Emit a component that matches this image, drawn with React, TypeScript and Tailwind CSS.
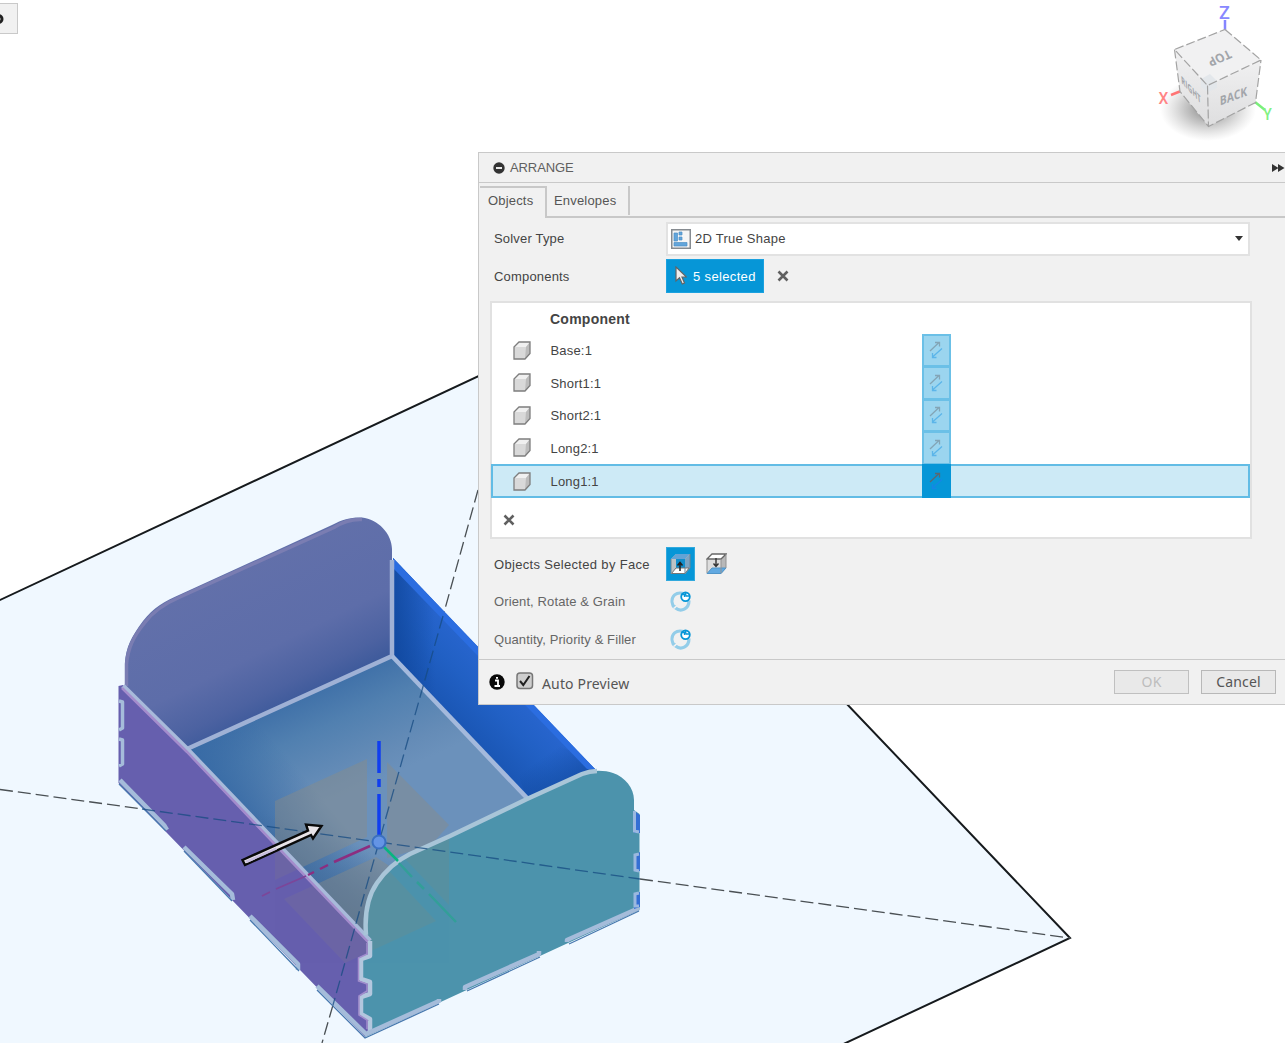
import React from "react";

const rows = ["Base:1", "Short1:1", "Short2:1", "Long2:1", "Long1:1"];

const TEAL =
  "M365 930 C365 905 370 893 377 883 C386 870 396 861 410 854 L450 836 L527 799 L582 774 C591 770 604 770 613 773 C625 777 634 788 634 800 L634 810 L639.5 814 L639.5 910 L365 1037 L370 1028 L370 1018 L361 1014 L361 995 L370 993 L370 982 L360 980 L360 958 L370 956 L370 942 Z";
const BACK_PANEL =
  "M125 686 L125 662 C126 648 131 637 143 621 C153 608 165 601 180 594.5 L332 525 C343 519 352 517 362 517.5 C378 519 392 534 392 549 L392 656 L187 748 Z";
const FLOOR = "M187 748 L392 656 L527 798 L410 854 C385 868 366 885 366 935 Z";
const PURPLE =
  "M118.5 686 L123 685 L370 941 L370 956 L360 958 L360 980 L370 982 L370 993 L361 995 L361 1014 L370 1018 L370 1028 L365 1037 L118.5 783 Z";

function Scene() {
  return (
    <svg className="absolute inset-0" width="1285" height="1043" viewBox="0 0 1285 1043">
      <defs>
        <linearGradient id="back" gradientUnits="userSpaceOnUse" x1="230" y1="570" x2="300" y2="712">
          <stop offset="0" stopColor="#6270aa" />
          <stop offset="0.55" stopColor="#5d6da9" />
          <stop offset="0.8" stopColor="#4c62a1" />
          <stop offset="1" stopColor="#365698" />
        </linearGradient>
        <linearGradient id="floor" gradientUnits="userSpaceOnUse" x1="290" y1="700" x2="335" y2="800">
          <stop offset="0" stopColor="#3f70a8" />
          <stop offset="0.35" stopColor="#5180b0" />
          <stop offset="0.8" stopColor="#658cb7" />
          <stop offset="1" stopColor="#6b91bb" />
        </linearGradient>
        <linearGradient id="floorLeft" gradientUnits="userSpaceOnUse" x1="240" y1="803" x2="290" y2="760">
          <stop offset="0" stopColor="#376aa5" stopOpacity="0.85" />
          <stop offset="1" stopColor="#376aa5" stopOpacity="0" />
        </linearGradient>
        <linearGradient id="floorLow" gradientUnits="userSpaceOnUse" x1="370" y1="850" x2="345" y2="920">
          <stop offset="0" stopColor="#456c98" stopOpacity="0" />
          <stop offset="1" stopColor="#456c98" stopOpacity="0.9" />
        </linearGradient>
        <linearGradient id="blue" gradientUnits="userSpaceOnUse" x1="425" y1="690" x2="478" y2="640">
          <stop offset="0" stopColor="#1a56b4" />
          <stop offset="0.5" stopColor="#2160c4" />
          <stop offset="1" stopColor="#2966d0" />
        </linearGradient>
        <linearGradient id="blueStart" gradientUnits="userSpaceOnUse" x1="393" y1="640" x2="435" y2="640">
          <stop offset="0" stopColor="#0f469b" stopOpacity="0.8" />
          <stop offset="1" stopColor="#0f469b" stopOpacity="0" />
        </linearGradient>
        <linearGradient id="blueEnd" gradientUnits="userSpaceOnUse" x1="560" y1="745" x2="582" y2="776">
          <stop offset="0" stopColor="#134ca3" stopOpacity="0" />
          <stop offset="1" stopColor="#134ca3" stopOpacity="0.75" />
        </linearGradient>
        <radialGradient id="shade">
          <stop offset="0" stopColor="#555" stopOpacity="0.75" />
          <stop offset="0.5" stopColor="#777" stopOpacity="0.4" />
          <stop offset="1" stopColor="#999" stopOpacity="0" />
        </radialGradient>
        <linearGradient id="cubeFace" x1="0" y1="0" x2="0" y2="1">
          <stop offset="0" stopColor="#f0f0f1" />
          <stop offset="1" stopColor="#dededf" />
        </linearGradient>
        <clipPath id="teal"><path d={TEAL} /></clipPath>
        <clipPath id="purple"><path d={PURPLE} /></clipPath>
      </defs>

      {/* work plane */}
      <path d="M-10 604.7 L517 358 L1070 938 L820 1055 L-10 1055 Z" fill="#f0f8ff" stroke="#161a1d" strokeWidth="2" />
      <g stroke="#4a5054" strokeWidth="1.3" strokeDasharray="13 5">
        <path d="M0 789.500 L142 809" />
        <path d="M640 879 L1070 938" />
        <path d="M478 490 L443 616" />
        <path d="M333 1005 L322 1043" />
      </g>

      {/* tray */}
      <path d="M393 558 L595 769 L583 775 L527 800 L392 656 Z" fill="url(#blue)" />
      <path d="M393 558 L595 769 L583 775 L527 800 L392 656 Z" fill="url(#blueStart)" />
      <path d="M500 720 L580 755 L597 771 L527 800 Z" fill="url(#blueEnd)" />
      <path d="M393 558 L595 769 L587 769 L393 568 Z" fill="#2b6de0" />
      <path d={FLOOR} fill="url(#floor)" />
      <path d={FLOOR} fill="url(#floorLeft)" />
      <path d={FLOOR} fill="url(#floorLow)" />
      <path d={BACK_PANEL} fill="url(#back)" />
      <path d="M126.500 686 L126.500 664 C128 648 133 637 144.500 623 C154 610 166 603 180 597 L334 527.500 C344 521 352 519 362 519.500" fill="none" stroke="#7a7db2" strokeWidth="3.500" />

      {/* origin planes */}
      <g fill="#8c8c85" opacity="0.42">
        <path d="M275 801 L367 759 L367 837 L275 880 Z" />
        <path d="M387 762 L449 825 L430 846 L387 858 Z" />
        <path d="M284 899 L376 857 L410 880 L366 935 L345 962 Z" />
      </g>
      <path d={PURPLE} fill="#665fae" />
      <path d={TEAL} fill="#4c93ac" />
      <g clipPath="url(#purple)" fill="#858282" opacity="0.18">
        <path d="M275 801 L367 837 L275 880 Z" />
        <path d="M284 899 L376 857 L436 921 L345 963 Z" />
      </g>
      <g clipPath="url(#teal)" fill="#7c887b" opacity="0.22">
        <path d="M387 762 L449 825 L449 905 L387 840 Z" />
        <path d="M284 899 L376 857 L436 921 L345 963 Z" />
      </g>
      <path d="M392 560 L392 656 L187 749" fill="none" stroke="#9fb1d5" strokeWidth="4.500" />
      <path d="M392 656 L527 798" fill="none" stroke="#a4b9dc" strokeWidth="4.500" />
      <path d="M123 686 L187 749 L370 941" fill="none" stroke="#a8bada" strokeWidth="5" />
      <path d="M122 688 L187 752 L369 943" fill="none" stroke="#a48ccc" strokeWidth="2.500" />
      <path d="M366 935 C364 909 370 893 377 883 C386 870 396 861 410 854 L450 836 L527 799 L582 774 Q590 771 597 771" fill="none" stroke="#a9c5d8" strokeWidth="4.500" />
      <path d="M370 941 L370 956 L361 959 L361 979 L370 982 L370 994 L361 997 L361 1014 L370 1019 L370 1033" fill="none" stroke="#b3c7de" strokeWidth="4.500" strokeLinejoin="round" />
      <path d="M367 943 L367 954 L358.500 958 L358.500 981 L367 984 L367 991 L359 996 L359 1015 L367 1020 L367 1029" fill="none" stroke="#a18dcc" strokeWidth="1.500" />
      <g fill="none" stroke="#a5bcda" strokeWidth="4.500" strokeLinejoin="round">
        <path d="M120 780 L164 825 L167 830" />
        <path d="M184 847 L232 894 L233 900" />
        <path d="M250 916 L298 964 L298 970" />
        <path d="M317 986 L366 1034 L439 1001 L439 999" />
        <path d="M465 990 L465 987 L539 954 L539 951" />
        <path d="M567 942 L567 940 L639 908" />
        <path d="M119 701 L122.500 702 L122.500 728 L119 730" strokeWidth="3.500" />
        <path d="M119 739 L122.500 740 L122.500 764 L119 766" strokeWidth="3.500" />
      </g>
      <g fill="none" stroke="#4778ae" strokeWidth="1.300">
        <path d="M119 784 L166 831 M184 851 L232 901 M250 920 L299 971 M317 990 L365 1038 L439 1004 M467 991 L540 957 M569 944 L639 911" />
      </g>
      <path d="M634 811 L640 815 L640 833 L634 833 Z M634 855 L640 852 L640 871 L634 871 Z M634 894 L640 892 L640 907 L634 909 Z" fill="#346fd4" />
      <path d="M634.500 811 L634.500 831 L639 832 M639 854 L635 855 L635 870 L639 871 M639 893 L635 894 L635 906 L639 906" fill="none" stroke="#9bb8df" strokeWidth="3" />
      <g stroke="#164b82" strokeWidth="1.300" strokeDasharray="13 5" opacity="0.75">
        <path d="M443 616 L379 842" />
        <path d="M379 842 L333 1005" />
        <path d="M142 809 L379 842" />
        <path d="M379 842 L640 879" />
      </g>

      {/* axes */}
      <path d="M379 741 V773 M379 779 V787 M379 794 V836" stroke="#103ef0" strokeWidth="3.500" />
      <path d="M370 846 L334 862 M328 865 L320 869 M314 872 L308 875" stroke="#8c2e80" strokeWidth="2.500" />
      <path d="M306 876 L276 889 M270 892 L262 896" stroke="#7c4699" strokeWidth="1.800" />
      <path d="M384 847 L398 861" stroke="#08b580" strokeWidth="2.500" />
      <path d="M399 863 L412 877 M417 882 L424 889 M429 894 L456 922" stroke="#329f98" strokeWidth="2.500" />
      <circle cx="379" cy="842" r="6.500" fill="#6494e5" stroke="#3a6fc0" strokeWidth="2" />
      <path d="M242.500 860 L308 830.500 L306 824.500 L321.500 826 L313 838.500 L311 835 L245 865 Z" fill="#e8e4e8" stroke="#090909" strokeWidth="2.400" />
      <path d="M245 861 L276 847.500 L277 849.500 L247 863 Z" fill="#c9bfdf" />

      {/* view cube */}
      <ellipse cx="1208" cy="109" rx="48" ry="32" fill="url(#shade)" />
      <path d="M1225 20 V31" stroke="#8585ff" strokeWidth="2.500" />
      <path d="M1171 95 L1181 91" stroke="#ff7474" strokeWidth="2.500" />
      <path d="M1255 102 L1265 110" stroke="#7af07a" strokeWidth="2.500" />
      <path d="M1174.500 49.500 L1207.500 85.500 L1208.500 126.500 L1180 91.500 Z" fill="url(#cubeFace)" />
      <path d="M1207.500 85.500 L1261 60 L1255.500 102.500 L1208.500 126.500 Z" fill="url(#cubeFace)" />
      <path d="M1225 29.500 L1261 60 L1207.500 85.500 L1174.500 49.500 Z" fill="#f1f1f2" />
      <path d="M1201 79 L1210 74 L1217 81 L1217 88 L1208 92 L1201 87 Z" fill="#e3e7eb" />
      <path d="M1225 29.500 L1261 60 L1207.500 85.500 L1174.500 49.500 Z M1174.500 49.500 L1180 91.500 L1208.500 126.500 L1255.500 102.500 L1261 60 M1207.500 85.500 L1208.500 126.500" fill="none" stroke="#a3a3a3" strokeWidth="1.200" strokeDasharray="9 3" />
      <g fontFamily="'Open Sans'" fontWeight="700" fill="#a2a5aa">
        <text transform="matrix(-.88 .38 -.45 -.85 1228.500 49.500)" fontSize="13" textLength="25" lengthAdjust="spacingAndGlyphs">TOP</text>
        <text transform="matrix(.9 -.33 .03 1 1220 105.500)" fontSize="12.500" textLength="30.500" lengthAdjust="spacingAndGlyphs">BACK</text>
        <text transform="matrix(.62 .66 .1 1 1181.500 83)" fontSize="11" textLength="32" lengthAdjust="spacingAndGlyphs">RIGHT</text>
      </g>
      <g fontFamily="Roboto" fontWeight="500">
        <text x="1219" y="19" fontSize="18" fill="#8888ff">Z</text>
        <text x="1158.500" y="104" fontSize="17" textLength="10" lengthAdjust="spacingAndGlyphs" fill="#ff8585">X</text>
        <text x="1263" y="120" fontSize="17" textLength="9" lengthAdjust="spacingAndGlyphs" fill="#82f282">Y</text>
      </g>
    </svg>
  );
}

function Cross() {
  return (
    <svg width="12" height="12" viewBox="0 0 12 12" fill="none" stroke="#606060" strokeWidth="2.600">
      <path d="M1.500 1.500 L10.500 10.500 M10.500 1.500 L1.500 10.500" />
    </svg>
  );
}

function BodyIcon() {
  return (
    <svg width="18" height="19" viewBox="0 0 18 19">
      <path d="M1 6 L6 1 H17 V12.500 L12 18 H1 Z" fill="#d9d9d9" />
      <path d="M1 6 L6 1 H17 L13 6 Z" fill="#f0f0f0" />
      <path d="M13 6 L17 1 V12.500 L12 18 Z" fill="#bcbcbc" />
      <path d="M1 6 L6 1 H17 V12.500 L12 18 H1 Z" fill="none" stroke="#7e7e7e" strokeWidth="1.300" />
    </svg>
  );
}

function FlipIcon({ active }: { active: boolean }) {
  return (
    <svg width="16" height="18" viewBox="0 0 16 18" fill="none" strokeWidth="1.300">
      <path d="M2 10 L11 1.500 M7 1.500 H11.500 V5.500" stroke={active ? "#5a6872" : "#83a5b6"} />
      <path d="M14 7.500 L4.500 16 M4.500 12 V16.500 H8.500" stroke={active ? "#1687e4" : "#5cb5e9"} />
    </svg>
  );
}

function FaceIcon({ up }: { up: boolean }) {
  return up ? (
    <svg width="21" height="22" viewBox="0 0 21 22">
      <path d="M1 6 L6 1 H20 V15 L15 21 H1 Z" fill="#bec3c5" />
      <path d="M1 6 L6 1 H20 L15 6 Z" fill="#62a3d6" />
      <path d="M15 6 L20 1 V15 L15 20 Z" fill="#7ba4c4" />
      <path d="M6 6 H15 V15 H6 Z" fill="#118ecc" />
      <path d="M1.500 20.500 L6 15 H19 L15 20.500 Z" fill="#fff" stroke="#777" />
      <path d="M1 6 V21 M20 1 V15 L15 20.500 V15" stroke="#6d8596" fill="none" />
      <path d="M10 18 V10 M7.500 12.500 L10 9.500 L12.500 12.500" stroke="#222" strokeWidth="1.500" fill="none" />
    </svg>
  ) : (
    <svg width="21" height="22" viewBox="0 0 21 22">
      <path d="M1 6 L6 1 H20 V15 L15 21 H1 Z" fill="#ddd" />
      <path d="M15 6 L20 1 V15 L15 21 Z" fill="#b8b8b8" />
      <path d="M1 20.500 L6 15 H20 L15 20.500 Z" fill="#61a9e1" stroke="#5195c8" />
      <path d="M1 6 L6 1 H20 L15 6 Z" fill="#fff" stroke="#666" strokeWidth="1.300" />
      <path d="M1 6 V20 M20 1 V15 M15 6 V20" stroke="#929292" />
      <path d="M10 5 V13 M7.500 10.500 L10 13.500 L12.500 10.500" stroke="#333" strokeWidth="1.400" fill="none" />
    </svg>
  );
}

function CycleIcon() {
  return (
    <svg width="21" height="21" viewBox="0 0 21 21" fill="none">
      <path d="M12.500 2.200 C6 .7 1.500 5.500 2 11 Q2.300 14 4.500 16.500" stroke="#93cde9" strokeWidth="3" />
      <path d="M5.500 17 C11 21.500 19 18 19 9.500" stroke="#93cde9" strokeWidth="3.200" />
      <path d="M1.500 15.500 L6 14 L4.500 18 Z" fill="#93cde9" />
      <path d="M3.500 17.500 L6.500 15" stroke="#f1f1f1" strokeWidth="1.400" />
      <circle cx="15.500" cy="5.800" r="4.300" fill="#fff" stroke="#0696d7" strokeWidth="1.800" />
      <path d="M11.500 3.500 H14.500 V6 M15.500 2 L16 5 H19" stroke="#0696d7" strokeWidth="1.300" />
    </svg>
  );
}

export default function App() {
  return (
    <div className="relative h-[1043px] w-[1285px] overflow-hidden bg-white font-['Liberation_Sans',sans-serif] text-[13px] leading-4 tracking-[0.18px] text-[#444]">
      <Scene />
      <div className="absolute -left-2 top-[3px] flex h-[31px] w-[26px] items-center border border-[#c9c9c9] bg-[#f1f1f1]">
        <svg width="12" height="12" viewBox="0 0 12 12" className="-ml-px">
          <circle cx="6.500" cy="6" r="3.500" fill="none" stroke="#222" strokeWidth="3" />
        </svg>
      </div>

      <div className="absolute left-[478px] top-[152px] flex h-[553px] w-[808px] flex-col border border-[#c9c9c9] bg-[#f1f1f1]">
        <header className="flex h-[30px] shrink-0 items-center justify-between border-b border-[#c9c9c9] pl-[14px] pr-px">
          <div className="flex items-center gap-[5px] tracking-[-0.1px] text-[#606060]">
            <svg width="12" height="12" viewBox="0 0 12 12">
              <circle cx="6" cy="6" r="5.700" fill="#333" />
              <path d="M3 6 H9" stroke="#fff" strokeWidth="1.800" />
            </svg>
            ARRANGE
          </div>
          <svg width="13" height="8" viewBox="0 0 13 8" fill="#333" className="mr-[-1px] mt-px">
            <path d="M0 0 L6.500 4 L0 8 Z M6 0 L12.500 4 L6 8 Z" />
          </svg>
        </header>

        <nav className="flex h-[35px] shrink-0 items-end text-[#555]">
          <div className="ml-px h-[32px] w-[67px] border-r-2 border-t-2 border-[#c8c8c8] pl-[8px] pt-[5px]">Objects</div>
          <div className="h-[32px] flex-1 border-b-2 border-[#c8c8c8]">
            <div className="h-[29px] w-[83px] border-r-2 border-[#c8c8c8] pl-[7px] pt-[7px]">Envelopes</div>
          </div>
        </nav>

        <div className="flex h-[41px] shrink-0 items-center pl-[15px]">
          <span className="w-[172px]">Solver Type</span>
          <div className="flex h-[34px] w-[584px] items-center border-2 border-[#e2e2e2] bg-white pl-[3px] pr-[5px]">
            <svg width="20" height="20" viewBox="0 0 20 20">
              <rect x=".75" y=".75" width="18.500" height="18.500" fill="#f5f5f5" stroke="#868b90" strokeWidth="1.500" />
              <path d="M3 4 H6.500 V12 H3 Z M8 3 H11 V6 H8 Z M8 8 H11 V11 H8 Z M3 13.500 H16 V17 H3 Z" fill="#62a5db" stroke="#4f91c5" strokeWidth=".7" />
            </svg>
            <span className="ml-[4px] flex-1 tracking-[0.25px]">2D True Shape</span>
            <svg width="8" height="5" viewBox="0 0 8 5"><path d="M0 0 H8 L4 5 Z" fill="#333" /></svg>
          </div>
        </div>
        <div className="flex h-[34px] shrink-0 items-center pl-[15px]">
          <span className="w-[172px] pt-px">Components</span>
          <button className="flex h-[34px] w-[98px] items-center border border-[#1ba1df] bg-[#0696d7] pl-[8px] text-left text-white">
            <svg width="12" height="20" viewBox="0 0 12 20">
              <path d="M1 1 V15 L4.500 11.800 L7.300 18 L9.500 17 L7 11 H11.500 Z" fill="#eee" stroke="#646464" strokeWidth="1.200" />
            </svg>
            <span className="ml-[6px] pt-px tracking-[0.35px]">5 selected</span>
          </button>
          <span className="ml-[13px]"><Cross /></span>
        </div>

        <section className="ml-[11px] mt-2 flex h-[238px] w-[762px] shrink-0 flex-col border-2 border-[#e1e1e1] bg-white">
          <div className="h-[31px] shrink-0 pl-[58px] pt-[8px] text-[14px] font-bold tracking-[0.25px]">Component</div>
          {rows.map((name, i) => (
            <div
              key={name}
              className={
                i === 4
                  ? "-ml-px flex h-[34px] shrink-0 items-center border-2 border-[#62bce5] bg-[#cdeaf6]"
                  : "-ml-px flex h-[32.5px] shrink-0 items-center border-2 border-transparent"
              }
            >
              <span className="ml-[20px] w-[37.500px]"><BodyIcon /></span>
              <span className="w-[371px] pt-[2px]">{name}</span>
              <span
                className={
                  i === 4
                    ? "flex h-[34px] w-[29px] items-center justify-center bg-[#0696d7]"
                    : "flex h-[33.500px] w-[29px] items-center justify-center border-2 border-[#6bc0e7] bg-[#9bd5ef]"
                }
              >
                <FlipIcon active={i === 4} />
              </span>
            </div>
          ))}
          <div className="flex flex-1 items-center pl-[11px] pt-1"><Cross /></div>
        </section>

        <div className="mt-[6px] flex h-[38px] shrink-0 items-center pl-[15px]">
          <span className="w-[172px] pt-px tracking-[0.32px]">Objects Selected by Face</span>
          <span className="flex h-[34px] w-[29px] items-center justify-center border border-[#31a9dd] bg-[#0696d7]"><FaceIcon up /></span>
          <span className="ml-[11px]"><FaceIcon up={false} /></span>
        </div>
        <div className="flex h-[37px] shrink-0 items-center pl-[15px] tracking-[0.12px] text-[#666]">
          <span className="w-[176px]">Orient, Rotate &amp; Grain</span><CycleIcon />
        </div>
        <div className="flex h-[38px] shrink-0 items-center pl-[15px] tracking-[0.1px] text-[#666]">
          <span className="w-[176px] pt-px">Quantity, Priority &amp; Filler</span><CycleIcon />
        </div>

        <footer className="mt-px flex flex-1 items-center border-t border-[#c9c9c9] pl-[10px] pr-[9px] font-['Noto_Sans',sans-serif] text-[14px] tracking-[0.15px] text-[#555]">
          <svg width="16" height="16" viewBox="0 0 16 16">
            <circle cx="8" cy="8" r="7.700" fill="#080808" />
            <path d="M6 6.500 H9 V12 M5.500 12 H11 M7 3.800 H9" stroke="#fff" strokeWidth="1.800" fill="none" />
          </svg>
          <svg width="18" height="18" viewBox="0 0 18 18" className="mb-[2px] ml-[11px]">
            <rect x="1" y="1" width="15.500" height="15.500" rx="3" fill="#cecece" stroke="#777" strokeWidth="1.500" />
            <path d="M4 9 L7.300 13 L13.500 4" stroke="#222" strokeWidth="2" fill="none" />
          </svg>
          <span className="ml-2 flex-1 pt-1">Auto Preview</span>
          <button className="mb-[1px] h-[24px] w-[75px] border border-[#c0c0c0] bg-[#e9e9e9] leading-[21px] text-[#bdbdbd]">OK</button>
          <button className="mb-[1px] ml-3 h-[24px] w-[75px] border border-[#b8b8b8] bg-[#e9e9e9] leading-[21px]">Cancel</button>
        </footer>
      </div>
    </div>
  );
}
